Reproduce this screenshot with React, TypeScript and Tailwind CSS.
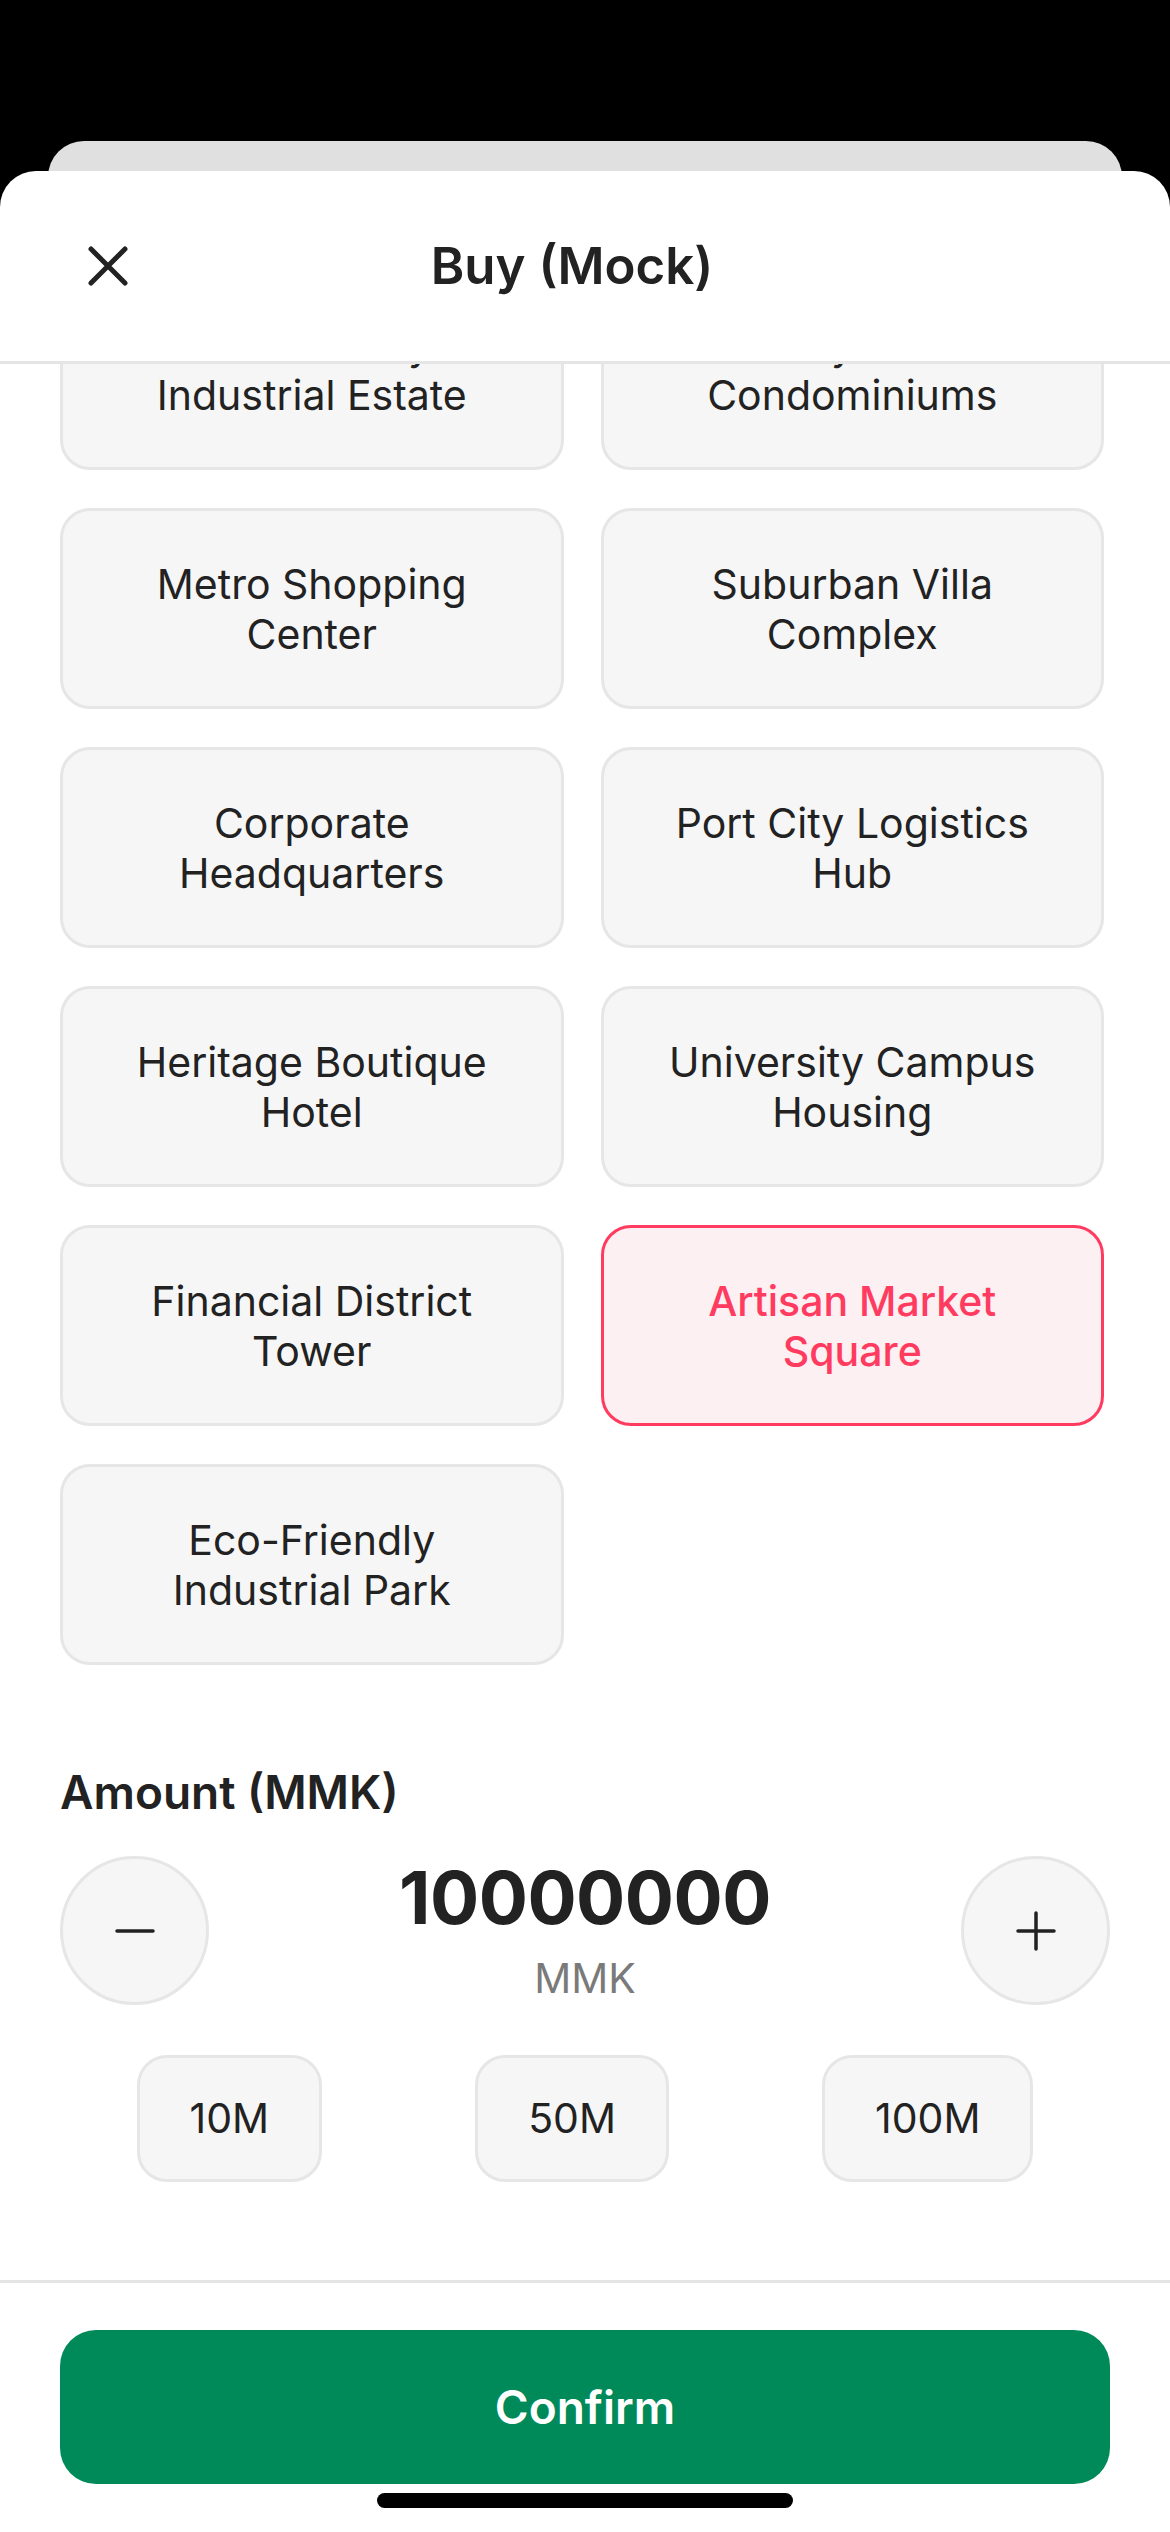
import React from "react";

const rows: string[][] = [
  ["Thilawa City Industrial Estate", "Skyline Condominiums"],
  ["Metro Shopping Center", "Suburban Villa Complex"],
  ["Corporate Headquarters", "Port City Logistics Hub"],
  ["Heritage Boutique Hotel", "University Campus Housing"],
  ["Financial District Tower", "Artisan Market Square"],
  ["Eco-Friendly Industrial Park"],
];

const SELECTED = "Artisan Market Square";

function Card({ label }: { label: string }) {
  const sel = label === SELECTED;
  return (
    <div
      className={
        sel
          ? "h-[201px] rounded-[30px] border-[3px] border-[#ff3b5f] bg-[#fdf0f3] flex items-center justify-center px-[40px] text-center text-[41px] leading-[50px] font-medium text-[#ff3b5f]"
          : "h-[201px] rounded-[30px] border-[3px] border-[#e6e6e6] bg-[#f6f6f6] flex items-center justify-center px-[40px] text-center text-[41px] leading-[50px] text-[#222222]"
      }
    >
      {label}
    </div>
  );
}

export default function App() {
  return (
    <div className="w-[1170px] h-[2532px] bg-black overflow-hidden font-['Inter','Noto_Sans',sans-serif]">
      <div className="h-[141px]" />
      <div className="mx-[48px] h-[60px] rounded-t-[36px] bg-[#e0e0e0]" />
      <div className="relative -mt-[30px] h-[2361px] bg-white rounded-t-[36px] flex flex-col">
        {/* Header */}
        <div className="h-[193px] shrink-0 border-b-[3px] border-[#e5e5e5] flex items-center px-[60px]">
          <div className="w-[96px] flex items-center justify-center">
            <svg width="40" height="40" viewBox="0 0 40 40">
              <path d="M3 3 L37 37 M37 3 L3 37" stroke="#222222" strokeWidth="5" strokeLinecap="round" />
            </svg>
          </div>
          <div className="flex-1 text-center text-[51px] font-semibold text-[#222222] leading-[60px]">Buy (Mock)</div>
          <div className="w-[122px]" />
        </div>

        {/* Scroll area */}
        <div className="flex-1 overflow-hidden">
          <div className="-mt-[95px] grid grid-cols-2 gap-x-[37px] gap-y-[38px] pl-[60px] pr-[66px]">
            {rows.flat().map((l) => (
              <Card key={l} label={l} />
            ))}
          </div>

          <div className="mt-[100px] px-[60px]">
            <div className="text-[46px] leading-[54px] font-semibold text-[#222222]">Amount (MMK)</div>

            <div className="mt-[37px] flex items-center justify-between">
              <div className="w-[149px] h-[149px] rounded-full border-[3px] border-[#e6e6e6] bg-[#f6f6f6] flex items-center justify-center">
                <svg width="40" height="40" viewBox="0 0 40 40">
                  <path d="M2 20 L38 20" stroke="#222222" strokeWidth="3.5" strokeLinecap="round" />
                </svg>
              </div>
              <div className="flex flex-col items-center">
                <div className="text-[73px] leading-[80px] font-bold text-[#222222] tracking-[-0.5px]">10000000</div>
                <div className="mt-[15px] text-[41px] leading-[50px] text-[#7a7a7a]">MMK</div>
              </div>
              <div className="w-[149px] h-[149px] rounded-full border-[3px] border-[#e6e6e6] bg-[#f6f6f6] flex items-center justify-center">
                <svg width="40" height="40" viewBox="0 0 40 40">
                  <path d="M2 20 L38 20 M20 2 L20 38" stroke="#222222" strokeWidth="3.5" strokeLinecap="round" />
                </svg>
              </div>
            </div>

            <div className="mt-[50px] flex justify-around">
              {["10M", "50M", "100M"].map((q) => (
                <div
                  key={q}
                  className="h-[127px] rounded-[30px] border-[3px] border-[#e6e6e6] bg-[#f6f6f6] px-[50px] flex items-center justify-center text-[41px] text-[#222222]"
                >
                  {q}
                </div>
              ))}
            </div>
          </div>
        </div>

        {/* Footer */}
        <div className="h-[252px] shrink-0 border-t-[3px] border-[#e5e5e5] px-[60px] pt-[47px]">
          <div className="h-[154px] rounded-[36px] bg-[#008a5a] flex items-center justify-center text-white text-[46px] font-semibold">
            Confirm
          </div>
        </div>

        <div className="absolute bottom-[24px] left-1/2 -translate-x-1/2 w-[416px] h-[15px] rounded-full bg-black" />
      </div>
    </div>
  );
}
